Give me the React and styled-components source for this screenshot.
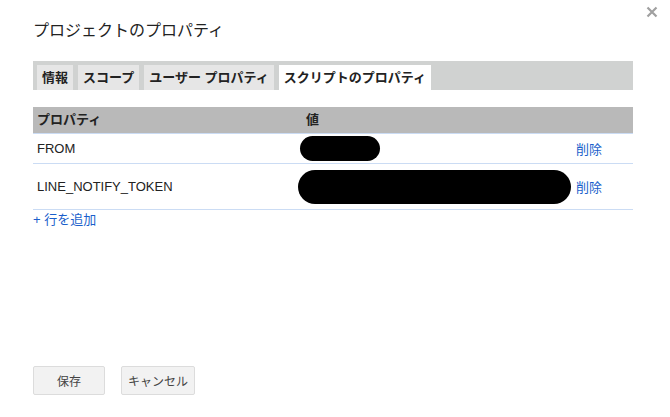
import React, { useState } from "react";
import styled, { createGlobalStyle } from "styled-components";

const GlobalStyle = createGlobalStyle`
  html, body {
    margin: 0;
    padding: 0;
    background: #ffffff;
  }
  body {
    font-family: "Liberation Sans", Arial, "Noto Sans CJK JP", sans-serif;
    font-size: 13px;
    color: #222222;
  }
`;

const Dialog = styled.div`
  position: relative;
  width: 670px;
  height: 417px;
  box-sizing: border-box;
  padding: 21px 37px 0 33px;
  display: flex;
  flex-direction: column;
`;

const Close = styled.button`
  position: absolute;
  top: 4px;
  right: 10px;
  border: none;
  background: none;
  padding: 0;
  width: 16px;
  height: 16px;
  cursor: pointer;
  display: flex;
  align-items: center;
  justify-content: center;
`;

const Title = styled.h1`
  margin: 0;
  font-size: 16px;
  font-weight: normal;
  line-height: 20px;
  color: #222222;
`;

const TabBar = styled.div`
  margin-top: 20px;
  height: 29px;
  background: #d0d2d1;
  display: flex;
  align-items: flex-end;
  gap: 5px;
  padding-left: 4px;
`;

const Tab = styled.div`
  height: 25px;
  line-height: 25px;
  padding: 0 5px 0 5px;
  font-weight: bold;
  font-size: 13px;
  color: #222222;
  background: ${(p) => (p.$active ? "#ffffff" : "#e6e6e6")};
  cursor: pointer;
  white-space: nowrap;
`;

const Table = styled.div`
  margin-top: 17px;
  display: grid;
  grid-template-columns: 269px 1fr 61px;
`;

const HeadCell = styled.div`
  background: #b9b9b9;
  height: 26px;
  line-height: 26px;
  padding-left: 4px;
  font-weight: bold;
  border-bottom: 1px solid #cbdcf4;
`;

const Cell = styled.div`
  height: ${(p) => p.$h}px;
  display: flex;
  align-items: center;
  padding-left: 4px;
  border-bottom: 1px solid #cbdcf4;
  box-sizing: border-box;
  white-space: nowrap;
`;

const Redacted = styled.div`
  background: #000000;
  border-radius: ${(p) => p.$h / 2}px;
  width: ${(p) => p.$w}px;
  height: ${(p) => p.$h}px;
  margin-left: ${(p) => p.$ml}px;
  flex-shrink: 0;
`;

const Link = styled.a`
  color: #1a5fcb;
  text-decoration: none;
  cursor: pointer;
`;

const AddRow = styled(Link)`
  margin-top: 1px;
  align-self: flex-start;
  line-height: 17px;
`;

const Footer = styled.div`
  margin-top: auto;
  margin-bottom: 22px;
  display: flex;
  gap: 16px;
`;

const Button = styled.button`
  height: 29px;
  min-width: 72px;
  padding: 0 6px;
  box-sizing: border-box;
  background: #f2f2f2;
  border: 1px solid #dcdcdc;
  border-radius: 2px;
  font-family: inherit;
  font-size: 12px;
  color: #444444;
  cursor: pointer;
`;

const rows = [
  { key: "FROM", h: 30, w: 80, ph: 25, ml: -6 },
  { key: "LINE_NOTIFY_TOKEN", h: 46, w: 273, ph: 34, ml: -8 },
];

const App = () => {
  const [tab, setTab] = useState(3);
  const tabs = ["情報", "スコープ", "ユーザー プロパティ", "スクリプトのプロパティ"];

  return (
    <>
      <GlobalStyle />
      <Dialog>
        <Close aria-label="閉じる">
          <svg width="12" height="12" viewBox="0 0 12 12">
            <path d="M1.5 1.5 L10.5 10.5 M10.5 1.5 L1.5 10.5" stroke="#a0a0a0" strokeWidth="2.2" />
          </svg>
        </Close>
        <Title>プロジェクトのプロパティ</Title>
        <TabBar>
          {tabs.map((t, i) => (
            <Tab key={t} $active={i === tab} onClick={() => setTab(i)}>
              {t}
            </Tab>
          ))}
        </TabBar>
        <Table>
          <HeadCell>プロパティ</HeadCell>
          <HeadCell>値</HeadCell>
          <HeadCell />
          {rows.map((r) => (
            <React.Fragment key={r.key}>
              <Cell $h={r.h}>{r.key}</Cell>
              <Cell $h={r.h}>
                <Redacted $w={r.w} $h={r.ph} $ml={r.ml} />
              </Cell>
              <Cell $h={r.h}>
                <Link>削除</Link>
              </Cell>
            </React.Fragment>
          ))}
        </Table>
        <AddRow>+ 行を追加</AddRow>
        <Footer>
          <Button>保存</Button>
          <Button>キャンセル</Button>
        </Footer>
      </Dialog>
    </>
  );
};

export default App;
